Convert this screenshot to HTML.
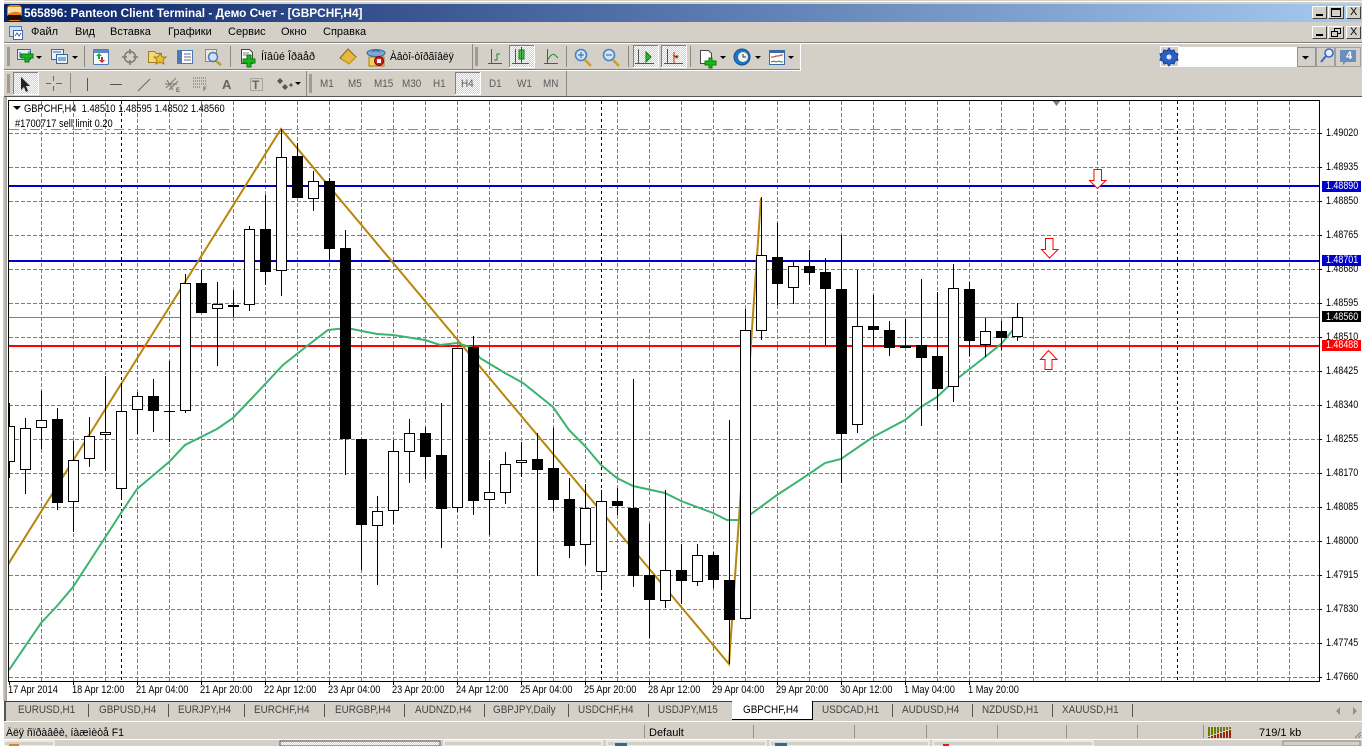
<!DOCTYPE html>
<html><head><meta charset="utf-8"><title>Panteon Client Terminal</title>
<style>
html,body{margin:0;padding:0;width:1368px;height:746px;overflow:hidden;background:#fff}
body{position:relative;font-family:"Liberation Sans","DejaVu Sans",sans-serif;font-size:11px;color:#000}
.a{position:absolute}
.t{position:absolute;white-space:nowrap;line-height:12px;transform-origin:0 50%;transform:scaleX(1)}
.g{color:#5a5a5a;transform:scaleX(.9)}
.p{position:absolute;left:1326px;white-space:nowrap;line-height:10px;font-size:11px;transform-origin:0 50%;transform:scaleX(.81)}
.x{position:absolute;top:684px;white-space:nowrap;line-height:12px;font-size:11px;transform-origin:0 50%;transform:scaleX(.84)}
.tb{position:absolute;top:704px;white-space:nowrap;line-height:13px;color:#444;transform-origin:0 50%;transform:scaleX(.9)}
.box{position:absolute;left:1322px;width:39px;height:11px}
.btn{position:absolute;background:#d4d0c8;border-top:1px solid #fff;border-left:1px solid #fff;border-right:1px solid #404040;border-bottom:1px solid #404040;box-sizing:border-box}
</style></head><body>
<!-- app frame -->
<div class="a" style="left:4px;top:0;width:1358px;height:97px;background:#d4d0c8"></div>
<div class="a" style="left:4px;top:1px;width:1358px;height:1px;background:#fff"></div>
<div class="a" style="left:4px;top:4px;width:1358px;height:18px;background:linear-gradient(90deg,#0a246a,#a6caf0)"></div>
<div class="a" style="left:4px;top:42px;width:1358px;height:1px;background:#808080"></div>
<div class="a" style="left:4px;top:43px;width:1358px;height:1px;background:#fff"></div>
<div class="a" style="left:4px;top:69px;width:796px;height:1px;background:#808080"></div>
<div class="a" style="left:4px;top:70px;width:797px;height:1px;background:#fff"></div>
<div class="a" style="left:800px;top:44px;width:1px;height:26px;background:#fff"></div>
<div class="a" style="left:4px;top:96px;width:1358px;height:1px;background:#555"></div>
<div class="a" style="left:3px;top:97px;width:4px;height:604px;background:linear-gradient(90deg,#d4d0c8,#a09c94)"></div>
<!-- bottom bars -->
<div class="a" style="left:4px;top:701px;width:1358px;height:45px;background:#d4d0c8"></div>
<div class="a" style="left:4px;top:701px;width:1358px;height:1px;background:#404040"></div>
<div class="a" style="left:4px;top:721px;width:1358px;height:1px;background:#fff"></div>
<div class="a" style="left:4px;top:739px;width:1358px;height:1px;background:#fff"></div>
<div class="a" style="left:732px;top:701px;width:80px;height:18px;background:#fff;border-right:1px solid #000;border-bottom:1px solid #000;box-sizing:content-box"></div>

<svg class="a" style="left:0;top:0" width="1368" height="746" viewBox="0 0 1368 746" xmlns="http://www.w3.org/2000/svg">
<defs>
<pattern id="ck" width="2" height="2" patternUnits="userSpaceOnUse"><rect width="2" height="2" fill="#d4d0c8"/><rect width="1" height="1" fill="#fff"/><rect x="1" y="1" width="1" height="1" fill="#fff"/></pattern>
<clipPath id="cc"><rect x="9" y="101" width="1310" height="580"/></clipPath>
</defs>
<!-- chart -->
<g clip-path="url(#cc)" shape-rendering="crispEdges" fill="none">
<path stroke="#708090" stroke-dasharray="4 2" d="M41.5 101V681M73.5 101V681M105.5 101V681M137.5 101V681M169.5 101V681M201.5 101V681M233.5 101V681M265.5 101V681M297.5 101V681M329.5 101V681M361.5 101V681M393.5 101V681M425.5 101V681M457.5 101V681M489.5 101V681M521.5 101V681M553.5 101V681M585.5 101V681M617.5 101V681M649.5 101V681M681.5 101V681M713.5 101V681M745.5 101V681M777.5 101V681M809.5 101V681M841.5 101V681M873.5 101V681M905.5 101V681M937.5 101V681M969.5 101V681M1001.5 101V681M1033.5 101V681M1065.5 101V681M1097.5 101V681M1129.5 101V681M1161.5 101V681M1193.5 101V681M1225.5 101V681M1257.5 101V681M1289.5 101V681"/>
<path stroke="#708090" stroke-dasharray="4 2" d="M9 133.5H1319M9 167.5H1319M9 201.5H1319M9 235.5H1319M9 269.5H1319M9 303.5H1319M9 337.5H1319M9 371.5H1319M9 405.5H1319M9 439.5H1319M9 473.5H1319M9 507.5H1319M9 541.5H1319M9 575.5H1319M9 609.5H1319M9 643.5H1319M9 677.5H1319"/>
<path stroke="#000" stroke-dasharray="3 3" d="M121.5 101V681M601.5 101V681M1177.5 101V681"/>
<path stroke="#32cd32" stroke-dasharray="10 4 3 4" d="M9 129.5H1316"/>
<rect x="9" y="185" width="1310" height="2" fill="#0000cd"/>
<rect x="9" y="260" width="1310" height="2" fill="#0000cd"/>
<rect x="9" y="317" width="1310" height="1" fill="#708090"/>
<rect x="9" y="345" width="1310" height="2" fill="#f00"/>
</g>
<g clip-path="url(#cc)" fill="none">
<path stroke="#b8860b" stroke-width="2" d="M7 566L281 129L729 664L761 198"/>
<path stroke="#3cb371" stroke-width="2" d="M9 670L41 623L57 606L73 587L121 513L137 489L169 462L185 445L201 437L217 429L233 418L253 397L283 365L307 346L328 330L347 328L377 334L393 335L425 340L440 345L457 343L473 348L480 358L505 373L523 383L553 407L569 430L585 446L601 465L617 478L633 486L665 493L681 501L713 513L727 520L738 520L751 514L777 495L800 480L825 463L841 459L873 437L905 420L921 407L937 397L953 382L985 357L1001 344L1013 330"/>
</g>
<g clip-path="url(#cc)" shape-rendering="crispEdges">
<path fill="none" stroke="#000" d="M9.5 403V478M25.5 418V494M41.5 391V449M57.5 408V510M73.5 441V532M89.5 417V467M105.5 376V471M121.5 383V499M137.5 392V434M153.5 379V432M169.5 361V442M185.5 274V413M201.5 270V313M217.5 282V366M233.5 290V317M249.5 226V311M265.5 195V285M281.5 129V296M297.5 143V198M313.5 171V211M329.5 178V262M345.5 230V475M361.5 439V570M377.5 496V585M393.5 440V524M409.5 419V483M425.5 427V479M441.5 403V548M457.5 348V512M473.5 336V515M489.5 460V535M505.5 452V504M521.5 442V477M537.5 433V576M553.5 428V511M569.5 478V558M585.5 484V565M601.5 490V589M617.5 488V515M633.5 379V587M649.5 524V638M665.5 490V608M681.5 544V604M697.5 544V586M713.5 552V588M729.5 420V664M745.5 309V619M761.5 197V340M777.5 223V305M793.5 262V304M809.5 250V285M825.5 258V345M841.5 235V483M857.5 270V433M873.5 295V347M889.5 321V356M905.5 319V348M921.5 279V426M937.5 292V410M953.5 264V402M969.5 282V356M985.5 318V357M1001.5 321V350M1017.5 303V341"/>
<path fill="#000" d="M52 419h11v84h-11zM148 396h11v15h-11zM196 283h11v30h-11zM228 305h11v2h-11zM260 229h11v43h-11zM292 156h11v42h-11zM324 181h11v68h-11zM340 248h11v191h-11zM356 439h11v86h-11zM420 433h11v24h-11zM436 455h11v54h-11zM468 347h11v154h-11zM532 459h11v11h-11zM548 468h11v32h-11zM564 499h11v47h-11zM612 501h11v5h-11zM628 508h11v68h-11zM644 575h11v25h-11zM676 570h11v11h-11zM708 555h11v25h-11zM724 580h11v40h-11zM772 257h11v27h-11zM804 266h11v7h-11zM820 272h11v17h-11zM836 289h11v145h-11zM868 326h11v4h-11zM884 330h11v18h-11zM900 346h11v2h-11zM916 345h11v13h-11zM932 356h11v33h-11zM964 289h11v52h-11zM996 331h11v7h-11zM164 411h11v1h-11z"/>
<path fill="#fff" stroke="#000" d="M4.5 426.5h10v35h-10zM20.5 428.5h10v41h-10zM36.5 420.5h10v7h-10zM68.5 460.5h10v41h-10zM84.5 436.5h10v22h-10zM100.5 432.5h10v2h-10zM116.5 411.5h10v77h-10zM132.5 396.5h10v13h-10zM180.5 283.5h10v127h-10zM212.5 304.5h10v4h-10zM244.5 229.5h10v75h-10zM276.5 157.5h10v113h-10zM308.5 181.5h10v17h-10zM372.5 511.5h10v14h-10zM388.5 451.5h10v59h-10zM404.5 433.5h10v18h-10zM452.5 348.5h10v159h-10zM484.5 492.5h10v7h-10zM500.5 464.5h10v28h-10zM516.5 460.5h10v2h-10zM580.5 508.5h10v36h-10zM596.5 501.5h10v70h-10zM660.5 570.5h10v30h-10zM692.5 555.5h10v26h-10zM740.5 330.5h10v288h-10zM756.5 255.5h10v75h-10zM788.5 266.5h10v21h-10zM852.5 326.5h10v98h-10zM948.5 288.5h10v98h-10zM980.5 331.5h10v13h-10zM1012.5 317.5h10v19h-10z"/>
</g>
<!-- arrows -->
<g fill="#fff" stroke="#f00">
<path d="M1094 169.5H1101.5V180.5H1106L1097.5 188.5L1089.5 180.5H1094Z"/>
<path d="M1045.5 238.5H1053V249.5H1058L1049.5 258L1041.5 249.5H1045.5Z"/>
<path d="M1045 369.5H1052V359.5H1057L1048.5 350.5L1040.5 359.5H1045Z"/>
</g>
<path d="M1052 100H1061L1056.5 106Z" fill="#708090"/>
<!-- frame -->
<g shape-rendering="crispEdges" fill="none" stroke="#000">
<path d="M8.5 100.5H1319.5V681.5H8.5Z"/>
<path d="M1319 133.5h3M1319 167.5h3M1319 201.5h3M1319 235.5h3M1319 269.5h3M1319 303.5h3M1319 337.5h3M1319 371.5h3M1319 405.5h3M1319 439.5h3M1319 473.5h3M1319 507.5h3M1319 541.5h3M1319 575.5h3M1319 609.5h3M1319 643.5h3M1319 677.5h3"/>
<path d="M9.5 681v4M73.5 681v4M137.5 681v4M201.5 681v4M265.5 681v4M329.5 681v4M393.5 681v4M457.5 681v4M521.5 681v4M585.5 681v4M649.5 681v4M713.5 681v4M777.5 681v4M841.5 681v4M905.5 681v4M969.5 681v4"/>
</g>
<!-- toolbar separators -->
<g shape-rendering="crispEdges" fill="#8a8a84">
<rect x="84" y="46" width="1" height="21"/><rect x="230" y="46" width="1" height="21"/><rect x="472" y="44" width="1" height="25"/><rect x="566" y="46" width="1" height="21"/><rect x="628" y="46" width="1" height="21"/><rect x="690" y="46" width="1" height="21"/>
<rect x="70" y="73" width="1" height="20"/><rect x="306" y="71" width="1" height="25"/><rect x="566" y="71" width="1" height="25"/>
<rect x="7" y="47" width="3" height="19" fill="#a09c94"/><rect x="7" y="74" width="3" height="19" fill="#a09c94"/><rect x="475" y="47" width="3" height="19" fill="#a09c94"/><rect x="309" y="74" width="3" height="19" fill="#a09c94"/>
</g>
<!-- pressed buttons -->
<g shape-rendering="crispEdges" fill="url(#ck)" stroke="#fff">
<rect x="13.5" y="72.5" width="25" height="22"/><rect x="455.5" y="72.5" width="25" height="22"/>
<rect x="509.5" y="45.5" width="25" height="22"/><rect x="633.5" y="45.5" width="25" height="22"/><rect x="661.5" y="45.5" width="25" height="22"/>
</g>
<g shape-rendering="crispEdges" fill="none" stroke="#808080">
<path d="M13.5 94V72.5H38M455.5 94V72.5H480M509.5 67V45.5H534M633.5 67V45.5H658M661.5 67V45.5H686"/>
</g>
<!-- menu icon -->
<rect x="9.5" y="26.5" width="12" height="10" fill="#cfe0f5" stroke="#5577bb"/><rect x="13.5" y="30.5" width="9" height="9" fill="#fff" stroke="#4466aa"/><path d="M15 36l2-3 2 3 2-3" stroke="#4466aa" fill="none"/>
<!-- app icon -->
<rect x="7" y="5" width="15" height="16" rx="4" fill="#e08020"/><path d="M8 7h13v6q-6-3-13 1z" fill="#ffe0a0"/><rect x="7" y="15" width="15" height="5" rx="2" fill="#201008"/>
<!-- new chart -->
<g>
<rect x="17.5" y="49.5" width="13" height="10" fill="#e8f0fb" stroke="#35689f"/><path d="M20 52v5h7" stroke="#35689f" fill="none"/>
<path d="M25 53h4v-3h0v3h4v4h-4v4h-4v-4h-4v-4h4z" fill="#18b818" stroke="#0a7a0a" transform="translate(0,1)"/>
<path d="M36 56h6l-3 3z" fill="#000"/>
<rect x="51.5" y="49.5" width="12" height="10" fill="#e8f0fb" stroke="#35689f"/><rect x="56.5" y="54.5" width="11" height="9" fill="#e8f0fb" stroke="#35689f"/><path d="M53 52h8M58 58h8M58 60h8" stroke="#35689f"/>
<path d="M72 56h6l-3 3z" fill="#000"/>
</g>
<!-- market watch -->
<rect x="93.5" y="49.5" width="15" height="15" rx="1" fill="#f4f8ff" stroke="#4a7ab5"/><rect x="94" y="50" width="14" height="3" fill="#5a8ac8"/>
<path d="M98 59v-3h-2l3-3 3 3h-2v3z" fill="#22aa22"/><path d="M101 57v3h-2l3 3 3-3h-2v-3z" fill="#d03020"/>
<!-- crosshair -->
<g fill="none" stroke="#7a7a74"><circle cx="130" cy="57" r="5.5" stroke-width="1.5"/><path d="M130 49v5M130 60v5M122 57h5M133 57h5" stroke-width="1.5"/></g>
<!-- folder star -->
<path d="M148.5 51.5h6l2 2h5v9h-13z" fill="#f4d878" stroke="#a08020"/><path d="M160 53l2 4h4l-3 3 1 4-4-2-4 2 1-4-3-3h4z" fill="#f0c030" stroke="#a08020"/>
<!-- terminal -->
<rect x="177.5" y="50.5" width="15" height="13" fill="#fff" stroke="#4a7ab5"/><rect x="178" y="51" width="4" height="12" fill="#4a7ab5"/><path d="M184 54h7M184 57h7M184 60h7" stroke="#668"/>
<!-- tester -->
<rect x="205.5" y="49.5" width="11" height="12" fill="#e8e8e4" stroke="#8a8a84"/><circle cx="213" cy="57" r="4.5" fill="#cfe4f8" stroke="#4a7ab5" stroke-width="1.5"/><path d="M216 61l5 4" stroke="#c09a30" stroke-width="2.5"/>
<!-- new order -->
<path d="M241.5 49.5h8l3 3v11h-11z" fill="#fff" stroke="#444"/><path d="M243 53h6M243 55h7" stroke="#888"/>
<path d="M247 55h4v4h4v4h-4v4h-4v-4h-4v-4h4z" fill="#18b818" stroke="#0a7a0a"/>
<!-- book -->
<path d="M340 58l8-9 8 8-7 7z" fill="#e6b840" stroke="#8a6a10"/><path d="M341 59l8 5 7-7" fill="none" stroke="#c89820"/>
<!-- hat -->
<path d="M369 57h15v9h-15z" fill="#f4d44c" stroke="#a08020"/><ellipse cx="376" cy="53" rx="9" ry="3.5" fill="#7aa8d8" stroke="#3a6a9a"/><path d="M372 52q4-4 8 0" fill="#6090c4" stroke="#3a6a9a"/><circle cx="379" cy="61" r="4.5" fill="#d02020" stroke="#800"/><rect x="377" y="59" width="4" height="4" fill="#fff"/>
<!-- chart types -->
<g fill="none" stroke="#555">
<path d="M491.5 49v15M488 63.5h14"/><path d="M515.5 49v15M512 63.5h17"/><path d="M547.5 49v15M544 63.5h14"/>
<path d="M638.5 49v15M635 63.5h19"/><path d="M667.5 49v15M664 63.5h19"/>
</g>
<path d="M494 60h3v-6h3" fill="none" stroke="#1a8a1a"/><rect x="519" y="50" width="5" height="9" fill="#4ec04e" stroke="#127a12"/><path d="M521.5 47v16" stroke="#127a12"/>
<path d="M547 61q5-9 8-6l3 3" fill="none" stroke="#1a8a1a"/><path d="M646 52l5 5-5 5z" fill="#22bb22" stroke="#127a12"/><path d="M674 52v11M678 56h-4l3 2z" stroke="#c03010"/>
<!-- zoom -->
<circle cx="581" cy="55" r="5.5" fill="#cfe4f8" stroke="#4a82c0" stroke-width="1.6"/><path d="M578 55h6M581 52v6" stroke="#2a62a0"/><path d="M585 60l6 6" stroke="#c8a030" stroke-width="2.6"/>
<circle cx="609" cy="55" r="5.5" fill="#cfe4f8" stroke="#4a82c0" stroke-width="1.6"/><path d="M606 55h6" stroke="#2a62a0"/><path d="M613 60l6 6" stroke="#c8a030" stroke-width="2.6"/>
<!-- doc plus -->
<path d="M700.5 50.5h8l3 3v10h-11z" fill="#fff" stroke="#444"/><path d="M709 58h3v3h4v4h-4v3h-3v-3h-4v-4h4z" fill="#18b818" stroke="#0a7a0a"/><path d="M720 56h6l-3 3z" fill="#000"/>
<!-- clock -->
<circle cx="742" cy="57" r="8" fill="#1f74c8" stroke="#10508c"/><circle cx="743" cy="57" r="5" fill="#f2f2ea"/><path d="M743 54v3h3" stroke="#333" fill="none"/><path d="M755 56h6l-3 3z" fill="#000"/>
<!-- templates -->
<rect x="769.5" y="50.5" width="15" height="14" fill="#fff" stroke="#3a6aa5"/><rect x="770" y="51" width="14" height="2" fill="#3a6aa5"/><path d="M771 57h3l2-1h3l2-1h2" stroke="#c03020" fill="none"/><path d="M771 62l3-1 2 1 3-1 2 1h2" stroke="#22882a" fill="none"/><path d="M788 56h6l-3 3z" fill="#000"/>
<!-- row 2 icons -->
<path d="M21 77l0 13 3-3 2 5 2-1-2-5h4z" fill="#222"/>
<g stroke="#666" fill="none">
<path d="M53.5 76v5M53.5 86v5M46 83.5h5M56 83.5h6"/>
<path d="M87.5 78v13" stroke="#555"/><path d="M110 84.5h12" stroke="#555"/><path d="M138 91l12-12" stroke="#666"/>
<path d="M166 88l10-10M169 90l9-9M165 84l12 0M167 80l6 10" stroke="#777"/>
<path d="M193 78h14M193 81h14M193 84h14M193 87h8" stroke-dasharray="1 1"/>
</g>
<text x="222" y="89" font-family="Liberation Sans,sans-serif" font-size="13" font-weight="bold" fill="#666">A</text>
<rect x="250.5" y="78.5" width="12" height="12" fill="none" stroke="#777" stroke-dasharray="1 1"/>
<text x="252" y="89" font-family="Liberation Sans,sans-serif" font-size="12" font-weight="bold" fill="#666">T</text>
<path d="M280 78l3 3-3 3-3-3zM285 84l3 3-3 3-3-3zM291 83l2 2-2 2-2-2z" fill="#555"/><path d="M295 82h6l-3 3z" fill="#000"/>
<!-- right search -->
<rect x="1160.5" y="46.5" width="18" height="20" fill="#d4d0c8" stroke="#fff"/>
<path d="M1169 48l2 3 3-1 1 3 3 1-1 3 1 3-3 1-1 3-3-1-2 3-2-3-3 1-1-3-3-1 1-3-1-3 3-1 1-3 3 1z" fill="#2a5fc8" stroke="#163c90"/><circle cx="1169" cy="57" r="2.5" fill="#dfe8f8"/>
<rect x="1179" y="47" width="118" height="20" fill="#fff"/>
<rect x="1297.5" y="47.5" width="18" height="19" fill="#d4d0c8" stroke="#909090"/><path d="M1302 56h7l-3.500 3.500z" fill="#000"/>
<rect x="1316.5" y="47.5" width="18" height="19" fill="#d4d0c8" stroke="#a0a0a0"/><circle cx="1329" cy="53" r="4" fill="#e8f0ff" stroke="#3a6ad0" stroke-width="1.6"/><path d="M1326 56l-5 6" stroke="#3a6ad0" stroke-width="2"/>
<rect x="1335.500" y="47.500" width="25" height="19" fill="#d4d0c8" stroke="#a0a0a0"/><rect x="1340" y="50" width="16" height="12" fill="#6a8ebf"/><path d="M1343 62v3l3-3z" fill="#6a8ebf"/>
<!-- tab separators -->
<g shape-rendering="crispEdges" fill="#555">
<rect x="88" y="704" width="1" height="13"/><rect x="168" y="704" width="1" height="13"/><rect x="244" y="704" width="1" height="13"/><rect x="324" y="704" width="1" height="13"/><rect x="404" y="704" width="1" height="13"/><rect x="484" y="704" width="1" height="13"/><rect x="568" y="704" width="1" height="13"/><rect x="648" y="704" width="1" height="13"/><rect x="892" y="704" width="1" height="13"/><rect x="972" y="704" width="1" height="13"/><rect x="1052" y="704" width="1" height="13"/><rect x="1132" y="704" width="1" height="13"/>
<rect x="4" y="702" width="2" height="19"/>
</g>
<path d="M1340 707v8l-4-4zM1353 707v8l4-4z" fill="#909090"/>
<!-- status separators -->
<g shape-rendering="crispEdges" fill="#909090">
<rect x="644" y="725" width="1" height="13"/><rect x="753" y="725" width="1" height="13"/><rect x="854" y="725" width="1" height="13"/><rect x="926" y="725" width="1" height="13"/><rect x="997" y="725" width="1" height="13"/><rect x="1066" y="725" width="1" height="13"/><rect x="1137" y="725" width="1" height="13"/><rect x="1203" y="725" width="1" height="13"/>
</g>
<g shape-rendering="crispEdges">
<path d="M1208 727h2v9h-2zM1211 727h2v8h-2zM1214 727h2v7h-2zM1217 727h2v6h-2zM1220 727h2v5h-2zM1223 727h2v4h-2zM1226 727h2v3h-2zM1229 727h2v2h-2z" fill="#6b7b00"/>
<path d="M1208 737h2v1h-2zM1211 736h2v2h-2zM1214 735h2v3h-2zM1217 734h2v4h-2zM1220 733h2v5h-2zM1223 732h2v6h-2zM1226 731h2v7h-2zM1229 730h2v8h-2z" fill="#a02010"/>
</g>
<path d="M1355 738l6-6M1358 738l3-3" stroke="#808080" fill="none"/>
<!-- taskbar strip -->
<g shape-rendering="crispEdges">
<rect x="4" y="741" width="50" height="5" fill="#d4d0c8" stroke="#fff"/>
<rect x="280" y="741" width="160" height="5" fill="url(#ck)" stroke="#555"/>
<rect x="444" y="741" width="158" height="5" fill="#d4d0c8" stroke="#fff"/>
<rect x="607" y="741" width="159" height="5" fill="#d4d0c8" stroke="#fff"/>
<rect x="770" y="741" width="159" height="5" fill="#d4d0c8" stroke="#fff"/>
<rect x="933" y="741" width="160" height="5" fill="#d4d0c8" stroke="#fff"/>
<rect x="1283" y="741" width="77" height="5" fill="#d4d0c8" stroke="#888"/>
<rect x="615" y="743" width="12" height="3" fill="#2a6a9a"/><rect x="775" y="743" width="12" height="3" fill="#2a6a9a"/><rect x="943" y="744" width="6" height="2" fill="#d02020"/>
<rect x="9" y="744" width="10" height="2" fill="#e08020"/>
</g>
</svg>

<!-- window buttons -->
<div class="btn" style="left:1312px;top:6px;width:15px;height:13px"><div class="a" style="left:3px;bottom:2px;width:7px;height:2px;background:#000"></div></div>
<div class="btn" style="left:1328px;top:6px;width:16px;height:13px"><div class="a" style="left:2px;top:1px;width:10px;height:9px;border:1px solid #000;border-top-width:2px;box-sizing:border-box"></div></div>
<div class="btn" style="left:1346px;top:6px;width:15px;height:13px"><div class="a" style="left:3px;top:-1px;font:11px/12px 'Liberation Sans',sans-serif">X</div></div>
<div class="btn" style="left:1312px;top:26px;width:15px;height:13px"><div class="a" style="left:3px;bottom:2px;width:7px;height:2px;background:#000"></div></div>
<div class="btn" style="left:1328px;top:26px;width:16px;height:13px"><div class="a" style="left:5px;top:1px;width:7px;height:6px;border:1px solid #000;box-sizing:border-box"></div><div class="a" style="left:2px;top:4px;width:7px;height:6px;border:1px solid #000;background:#d4d0c8;box-sizing:border-box"></div></div>
<div class="btn" style="left:1346px;top:26px;width:15px;height:13px"><div class="a" style="left:3px;top:-1px;font:11px/12px 'Liberation Sans',sans-serif">X</div></div>

<!-- title + menu -->
<span class="t" style="left:24px;top:7px;color:#fff;font-weight:bold;font-size:12px;transform:scaleX(.985)">565896: Panteon Client Terminal - Демо Счет - [GBPCHF,H4]</span>
<span class="t" style="left:31px;top:26px">Файл</span>
<span class="t" style="left:75px;top:26px">Вид</span>
<span class="t" style="left:110px;top:26px">Вставка</span>
<span class="t" style="left:168px;top:26px">Графики</span>
<span class="t" style="left:228px;top:26px">Сервис</span>
<span class="t" style="left:281px;top:26px">Окно</span>
<span class="t" style="left:323px;top:26px">Справка</span>
<span class="t" style="left:261px;top:51px;transform:scaleX(.98)">Íîâûé Îðäåð</span>
<span class="t" style="left:390px;top:51px;transform:scaleX(.93)">Àâòî-òîðãîâëÿ</span>
<span class="t g" style="left:320px;top:78px">M1</span>
<span class="t g" style="left:348px;top:78px">M5</span>
<span class="t g" style="left:374px;top:78px">M15</span>
<span class="t g" style="left:402px;top:78px">M30</span>
<span class="t g" style="left:433px;top:78px">H1</span>
<span class="t g" style="left:461px;top:78px">H4</span>
<span class="t g" style="left:489px;top:78px">D1</span>
<span class="t g" style="left:517px;top:78px">W1</span>
<span class="t g" style="left:543px;top:78px">MN</span>
<span class="a" style="left:1346px;top:50px;color:#fff;font:bold 11px/12px 'Liberation Sans',sans-serif">4</span>
<span class="a" style="left:176px;top:88px;color:#666;font:bold 6px/7px 'Liberation Sans',sans-serif">E</span>
<span class="a" style="left:203px;top:87px;color:#666;font:bold 6px/7px 'Liberation Sans',sans-serif">F</span>

<!-- chart text -->
<div class="a" style="left:13px;top:106px;width:0;height:0;border-left:4px solid transparent;border-right:4px solid transparent;border-top:4px solid #000"></div>
<span class="t" style="left:24px;top:103px;transform:scaleX(.85)">GBPCHF,H4&nbsp; 1.48510 1.48595 1.48502 1.48560</span>
<span class="t" style="left:15px;top:118px;transform:scaleX(.845)">#1700717 sell limit 0.20</span>

<span class="p" style="top:128px">1.49020</span><span class="p" style="top:162px">1.48935</span><span class="p" style="top:196px">1.48850</span><span class="p" style="top:230px">1.48765</span><span class="p" style="top:264px">1.48680</span><span class="p" style="top:298px">1.48595</span><span class="p" style="top:332px">1.48510</span><span class="p" style="top:366px">1.48425</span><span class="p" style="top:400px">1.48340</span><span class="p" style="top:434px">1.48255</span><span class="p" style="top:468px">1.48170</span><span class="p" style="top:502px">1.48085</span><span class="p" style="top:536px">1.48000</span><span class="p" style="top:570px">1.47915</span><span class="p" style="top:604px">1.47830</span><span class="p" style="top:638px">1.47745</span><span class="p" style="top:672px">1.47660</span>

<div class="box" style="top:181px;background:#0000cd"></div><span class="p" style="top:181px;color:#fff">1.48890</span>
<div class="box" style="top:255px;background:#0000cd"></div><span class="p" style="top:255px;color:#fff">1.48701</span>
<div class="box" style="top:311px;background:#000"></div><span class="p" style="top:312px;color:#fff">1.48560</span>
<div class="box" style="top:340px;background:#f00"></div><span class="p" style="top:340px;color:#fff">1.48488</span>

<span class="x" style="left:8px">17 Apr 2014</span><span class="x" style="left:72px">18 Apr 12:00</span><span class="x" style="left:136px">21 Apr 04:00</span><span class="x" style="left:200px">21 Apr 20:00</span><span class="x" style="left:264px">22 Apr 12:00</span><span class="x" style="left:328px">23 Apr 04:00</span><span class="x" style="left:392px">23 Apr 20:00</span><span class="x" style="left:456px">24 Apr 12:00</span><span class="x" style="left:520px">25 Apr 04:00</span><span class="x" style="left:584px">25 Apr 20:00</span><span class="x" style="left:648px">28 Apr 12:00</span><span class="x" style="left:712px">29 Apr 04:00</span><span class="x" style="left:776px">29 Apr 20:00</span><span class="x" style="left:840px">30 Apr 12:00</span><span class="x" style="left:904px">1 May 04:00</span><span class="x" style="left:968px">1 May 20:00</span>

<!-- tabs -->
<span class="tb" style="left:18px">EURUSD,H1</span><span class="tb" style="left:99px">GBPUSD,H4</span><span class="tb" style="left:178px">EURJPY,H4</span><span class="tb" style="left:254px">EURCHF,H4</span><span class="tb" style="left:335px">EURGBP,H4</span><span class="tb" style="left:415px">AUDNZD,H4</span><span class="tb" style="left:493px">GBPJPY,Daily</span><span class="tb" style="left:578px">USDCHF,H4</span><span class="tb" style="left:658px">USDJPY,M15</span><span class="tb" style="left:743px;color:#000">GBPCHF,H4</span><span class="tb" style="left:822px">USDCAD,H1</span><span class="tb" style="left:902px">AUDUSD,H4</span><span class="tb" style="left:982px">NZDUSD,H1</span><span class="tb" style="left:1062px">XAUUSD,H1</span>

<!-- status -->
<span class="t" style="left:6px;top:727px;transform:scaleX(.95)">Äëÿ ñïðàâêè, íàæìèòå F1</span>
<span class="t" style="left:649px;top:727px">Default</span>
<span class="t" style="left:1259px;top:727px">719/1 kb</span>
</body></html>
